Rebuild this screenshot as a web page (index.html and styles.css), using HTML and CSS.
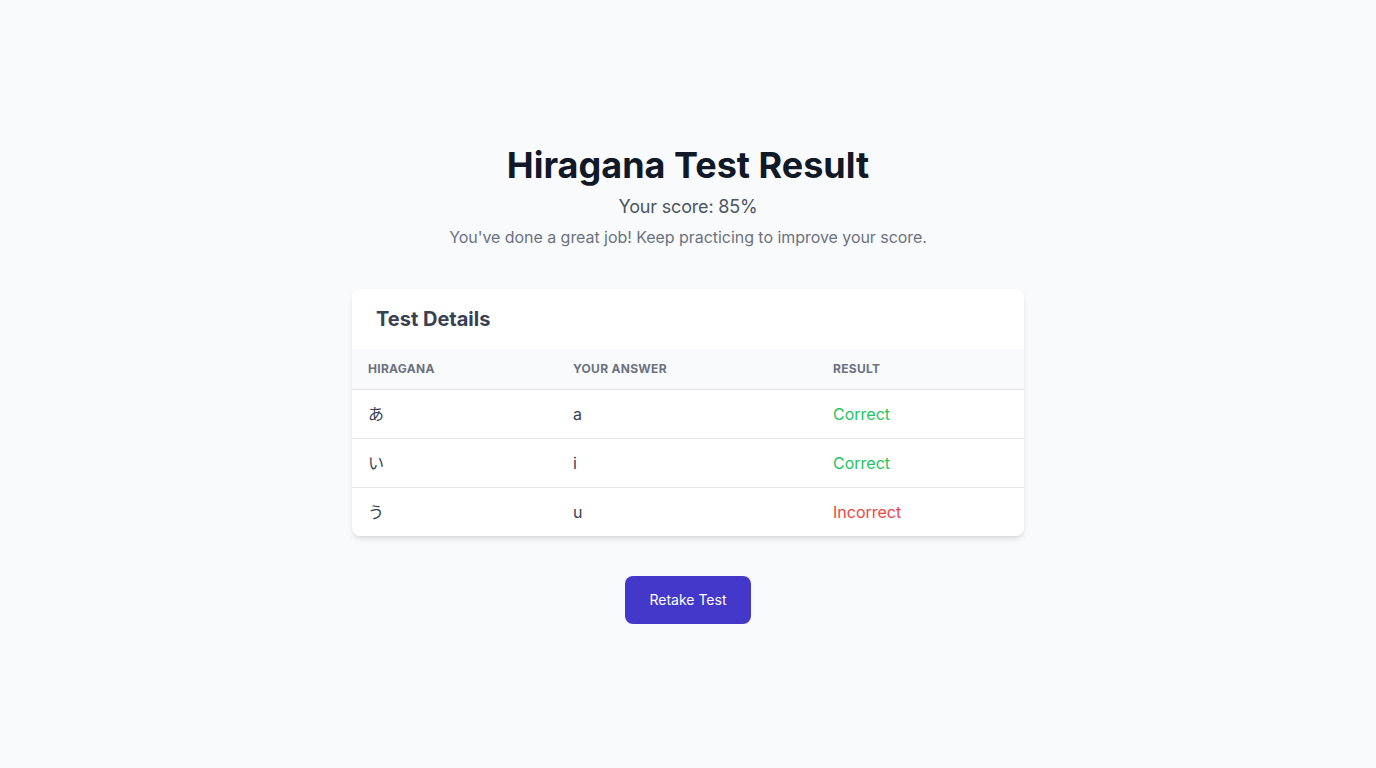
FILE: index.html
```html
<!DOCTYPE html>
<html lang="en">
<head>
<meta charset="utf-8">
<title>Hiragana Test Result</title>
<link rel="stylesheet" href="styles.css">
</head>
<body>
<main class="page">
  <div class="wrap">
    <h1 class="title">Hiragana Test Result</h1>
    <p class="score">Your score: 85%</p>
    <p class="note">You've done a great job! Keep practicing to improve your score.</p>

    <section class="card">
      <h2 class="card-title">Test Details</h2>
      <table class="tbl">
        <colgroup>
          <col class="c1"><col class="c2"><col class="c3">
        </colgroup>
        <thead>
          <tr><th>Hiragana</th><th>Your Answer</th><th>Result</th></tr>
        </thead>
        <tbody>
          <tr><td class="kana">あ</td><td>a</td><td class="ok">Correct</td></tr>
          <tr><td class="kana">い</td><td>i</td><td class="ok">Correct</td></tr>
          <tr><td class="kana">う</td><td>u</td><td class="bad">Incorrect</td></tr>
        </tbody>
      </table>
    </section>

    <div class="actions">
      <button class="btn" type="button">Retake Test</button>
    </div>
  </div>
</main>
</body>
</html>
```

FILE: styles.css
```css
* { box-sizing: border-box; }
html, body { margin: 0; padding: 0; }
body {
  background: #f9fafb;
  font-family: Inter, "Noto Sans CJK JP", sans-serif;
  color: #374151;
}
.page {
  min-height: 768px;
  display: flex;
  align-items: center;
  justify-content: center;
}
.wrap {
  width: 672px;
  text-align: center;
}
.title {
  margin: 0;
  font-size: 36px;
  line-height: 40px;
  font-weight: 700;
  color: #111827;
}
.score {
  margin: 8px 0 0;
  font-size: 18px;
  line-height: 28px;
  color: #4b5563;
  letter-spacing: -0.01em;
}
.note {
  margin: 4px 0 0;
  font-size: 16px;
  line-height: 24px;
  color: #6b7280;
  letter-spacing: -0.003em;
}
.card {
  margin-top: 40px;
  background: #fff;
  border-radius: 8px;
  box-shadow: 0 4px 6px -1px rgba(0,0,0,0.1), 0 2px 4px -2px rgba(0,0,0,0.1);
  overflow: hidden;
  text-align: left;
}
.card-title {
  margin: 0;
  padding: 16px 24px;
  font-size: 20px;
  line-height: 28px;
  font-weight: 700;
  color: #374151;
}
.tbl {
  width: 100%;
  border-collapse: collapse;
  table-layout: fixed;
}
.c1 { width: 205px; }
.c2 { width: 260px; }
.c3 { width: 207px; }
.tbl th {
  background: #f9fafb;
  padding: 12px 16px;
  font-size: 12px;
  line-height: 16px;
  font-weight: 700;
  text-transform: uppercase;
  letter-spacing: 0.025em;
  color: #6b7280;
  text-align: left;
  border-bottom: 1px solid #e5e7eb;
}
.tbl td {
  padding: 12px 16px;
  font-size: 16px;
  line-height: 24px;
  color: #374151;
}
.tbl tbody tr + tr td { border-top: 1px solid #e5e7eb; }
.tbl td.ok { color: #22c55e; }
.tbl td.bad { color: #ef4444; }
.actions {
  margin-top: 40px;
  display: flex;
  justify-content: center;
}
.btn {
  font-family: Inter, sans-serif;
  font-size: 14px;
  line-height: 20px;
  padding: 14px 24px;
  border: 0;
  border-radius: 8px;
  background: #4338ca;
  color: #fff;
  cursor: pointer;
}
```
